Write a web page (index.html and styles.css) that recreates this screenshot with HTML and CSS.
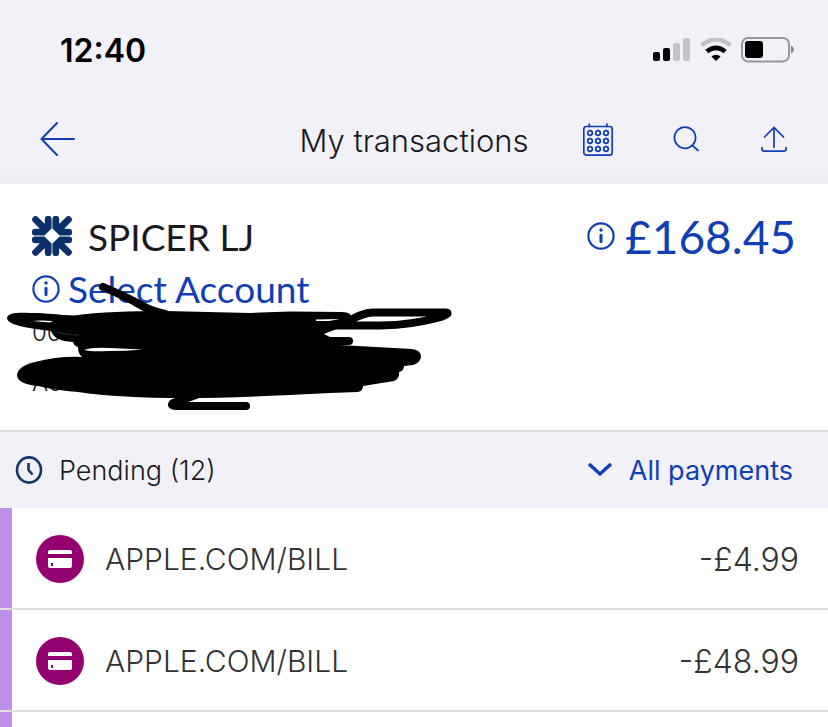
FILE: index.html
```html
<!DOCTYPE html>
<html lang="en">
<head>
<meta charset="utf-8">
<meta name="viewport" content="width=device-width, initial-scale=1">
<title>My transactions</title>
<link rel="stylesheet" href="styles.css">
</head>
<body>
<header class="top">
  <div class="status">
    <span class="clock">12:40</span>
    <span class="status-icons">
      <svg width="38" height="24" viewBox="0 0 38 24">
        <rect x="0" y="14" width="7" height="9" rx="2"/>
        <rect x="10" y="10" width="7" height="13" rx="2"/>
        <rect x="20" y="5" width="7" height="18" rx="2" fill="#c4c3c9"/>
        <rect x="30" y="0" width="7" height="23" rx="2" fill="#c4c3c9"/>
      </svg>
      <svg width="32" height="24" viewBox="0 0 32 24" fill="none">
        <path d="M1.600 7.400Q16-4.600 30.400 7.400" stroke="#c4c3c9" stroke-width="4.600"/>
        <path d="M6.800 13.600Q16 6 25.200 13.600" stroke="#000" stroke-width="4.600"/>
        <path d="M11.400 18.600Q16 15 20.600 18.600L16 23z" fill="#000"/>
      </svg>
      <svg width="54" height="26" viewBox="0 0 54 26">
        <rect x="1" y="1" width="47" height="23.4" rx="6" fill="none" stroke="#98979d" stroke-width="2"/>
        <rect x="4" y="4" width="18" height="17" rx="3"/>
        <path d="M50 8.6q3 1.2 3 4t-3 4z" fill="#8b8a90"/>
      </svg>
    </span>
  </div>
  <nav class="nav">
    <button class="icon-btn" aria-label="Back">
      <svg width="36" height="36" viewBox="0 0 36 36"><path d="M17 1L1.500 17L17 33M2 17H34" stroke-width="2"/></svg>
    </button>
    <h1>My transactions</h1>
    <div class="actions">
      <button class="icon-btn" aria-label="Calendar">
        <svg width="32" height="34" viewBox="0 0 32 34" stroke-width="1.7">
          <rect x="1.800" y="3.500" width="28.400" height="28.600" rx="2.600"/>
          <path d="M7.300 1V3.500M24.900 1V3.500"/>
          <circle cx="8" cy="10" r="2.300"/><circle cx="16" cy="10" r="2.300"/><circle cx="24" cy="10" r="2.300"/>
          <circle cx="8" cy="18" r="2.300"/><circle cx="16" cy="18" r="2.300"/><circle cx="24" cy="18" r="2.300"/>
          <circle cx="8" cy="26" r="2.300"/><circle cx="16" cy="26" r="2.300"/><circle cx="24" cy="26" r="2.300"/>
        </svg>
      </button>
      <button class="icon-btn" aria-label="Search">
        <svg width="28" height="28" viewBox="0 0 28 28" stroke-width="1.7"><circle cx="12" cy="11.700" r="10.600"/><path d="M19.300 19.300L25 24.500"/></svg>
      </button>
      <button class="icon-btn" aria-label="Share">
        <svg width="28" height="28" viewBox="0 0 28 28" stroke-width="1.7"><path d="M14 21.500V1.500M4.500 11L14 1.500L23.500 11M2 21.500V23Q2 25.200 4.500 25.200H23.500Q26 25.200 26 23V21.500"/></svg>
      </button>
    </div>
  </nav>
</header>
<main>
  <section class="account">
    <div class="account-row">
      <svg class="logo" width="40" height="40" viewBox="0 0 40 40">
        <defs><g id="arrow"><path d="M16.200 3.200V11L11 16.200H3.200M3.600 3.600L12 12"/></g></defs>
        <use href="#arrow"/>
        <use href="#arrow" transform="rotate(90 20 20)"/>
        <use href="#arrow" transform="rotate(180 20 20)"/>
        <use href="#arrow" transform="rotate(270 20 20)"/>
      </svg>
      <h2>SPICER LJ</h2>
      <button class="balance">
        <svg width="28" height="28" viewBox="0 0 28 28"><circle cx="14" cy="14" r="12.600" fill="none" stroke="currentColor" stroke-width="2.2"/><circle cx="14" cy="8" r="1.700"/><rect x="12.500" y="12" width="3" height="9" rx="1.200"/></svg>
        <span>£168.45</span>
      </button>
    </div>
    <button class="select">
      <svg width="28" height="28" viewBox="0 0 28 28"><circle cx="14" cy="14" r="12.600" fill="none" stroke="currentColor" stroke-width="2.2"/><circle cx="14" cy="8" r="1.700"/><rect x="12.500" y="12" width="3" height="9" rx="1.200"/></svg>
      <span>Select Account</span>
    </button>
    <p class="detail">00</p>
    <p class="detail">Ac</p>
    <svg class="scribble" width="470" height="136" viewBox="0 280 470 136">
      <path d="M7 318C8 313 16 312.500 30 313C48 313 60 315 74 315.500C100 312 130 311 165 311L250 313L290 311.500L342 312Q347 312 350 314L352 322L334 330L324 334L330 337L352 338L340 345L412 349Q421 350 421 357Q420 363 413 365L404 366Q404 371 399 372Q400 378 394 381L363 386Q363 391 358 392L330 393Q240 398 185 398Q120 398 78 392Q55 390 38 386Q17 384 17 375Q18 366 35 362Q58 356 82 357Q78 354 78 347Q74 346 73 342Q54 341 51 331C35 329 7 326 7 318Z"/>
      <path class="line" d="M103 287C112 291 125 296 137 303Q150 311 165 314"/>
      <path class="line" d="M318 331Q326 327 350 320C358 316 364 313 373 312.500H446Q451 313 441 317Q413 325 380 325.500H328M330 341H349"/>
      <path class="line" d="M196 395Q182 400 173 403Q170 406 176 406H246"/>
      <path class="gap" d="M84 350Q92 347 110 348L143 349.500Q125 351 108 351Q92 352 84 350ZM32 321Q40 320 53 321L50 322.500ZM316 319.500L340 319L329 321H316Z"/>
      <path d="M57 332Q65 335 79 335" fill="none" stroke="#444" stroke-width=".7"/>
    </svg>
  </section>
  <section>
    <div class="pending">
      <svg width="28" height="28" viewBox="0 0 28 28" fill="none" stroke="#12366d" stroke-width="2.600"><ellipse cx="14" cy="14" rx="12" ry="12.600"/><path d="M13.500 7V14L17.500 18.500"/></svg>
      <h3>Pending (12)</h3>
      <button class="filter">
        <svg width="26" height="16" viewBox="0 0 26 16"><path d="M2 2L13 12L24 2"/></svg>
        <span>All payments</span>
      </button>
    </div>
    <ul class="list">
      <li>
        <svg width="48" height="48" viewBox="0 0 48 48"><circle cx="24" cy="24" r="24" fill="#930070"/><path fill="#fff" fill-rule="evenodd" d="M12 19V17Q12 15 14 15H34Q36 15 36 17V19ZM12 23H36V31Q36 33 34 33H14Q12 33 12 31ZM15 28V31H17V28Z"/></svg>
        <span class="payee">APPLE.COM/BILL</span><span>-£4.99</span>
      </li>
      <li>
        <svg width="48" height="48" viewBox="0 0 48 48"><circle cx="24" cy="24" r="24" fill="#930070"/><path fill="#fff" fill-rule="evenodd" d="M12 19V17Q12 15 14 15H34Q36 15 36 17V19ZM12 23H36V31Q36 33 34 33H14Q12 33 12 31ZM15 28V31H17V28Z"/></svg>
        <span class="payee">APPLE.COM/BILL</span><span>-£48.99</span>
      </li>
      <li class="more"></li>
    </ul>
  </section>
</main>
</body>
</html>
```
FILE: styles.css
```css
* {
  box-sizing: border-box;
}

body {
  margin: 0;
  background: #fff;
  color: #1a1a1e;
  font-family: Inter, "Liberation Sans", sans-serif;
  font-weight: 300;
}

h1, h2, h3, p, ul {
  margin: 0;
  padding: 0;
  font-weight: 300;
}

svg {
  display: block;
  flex: none;
}

button {
  padding: 0;
  border: 0;
  background: none;
  color: #103eb5;
  font: inherit;
}

button svg {
  fill: currentColor;
}

.top {
  background: linear-gradient(#f2f1f8 92%, #eeedf3);
}

.status {
  display: flex;
  justify-content: space-between;
  align-items: center;
  height: 96px;
  padding: 4px 33px 0 60px;
}

.clock {
  color: #000;
  font-size: 32px;
  font-weight: 600;
}

.status-icons {
  display: flex;
  align-items: center;
  gap: 9px;
}

.nav {
  display: grid;
  grid-template-columns: 1fr auto 1fr;
  align-items: center;
  height: 88px;
  padding: 0 40px;
}

.nav h1 {
  font-size: 31px;
}

.icon-btn svg {
  fill: none;
  stroke: currentColor;
  stroke-linecap: round;
}

.actions {
  display: flex;
  justify-content: flex-end;
  align-items: center;
  gap: 59px;
}

.account {
  position: relative;
  height: 248px;
  padding: 27px 32px 0;
  border-bottom: 2px solid #dedede;
  font-family: Lato, "Liberation Sans", sans-serif;
}

.account-row {
  display: flex;
  align-items: center;
  height: 50px;
}

.logo {
  fill: none;
  stroke: #0b3168;
  stroke-width: 6.8;
  stroke-linecap: round;
}

.account h2 {
  margin-left: 16px;
  font-size: 37px;
  font-weight: 400;
}

.balance {
  display: flex;
  align-items: center;
  gap: 10px;
  margin-left: auto;
  font-size: 46px;
  font-weight: 400;
}

.select {
  display: flex;
  align-items: center;
  gap: 8px;
  height: 55px;
  font-size: 37px;
  font-weight: 400;
}

.detail {
  height: 50px;
  font-family: Inter, "Liberation Sans", sans-serif;
  font-size: 24px;
  line-height: 34px;
}

.scribble {
  position: absolute;
  top: 96px;
  left: 0;
}

.line {
  fill: none;
  stroke: #000;
  stroke-width: 8;
  stroke-linecap: round;
  stroke-linejoin: round;
}

.gap {
  fill: #fff;
}

.pending {
  display: flex;
  align-items: center;
  gap: 16px;
  height: 76px;
  padding: 0 35px 0 15px;
  background: #f2f1f8;
  font-size: 27px;
}

.pending h3 {
  font-size: 27px;
}

.filter {
  display: flex;
  align-items: center;
  gap: 16px;
  margin-left: auto;
  font-weight: 400;
}

.filter svg {
  fill: none;
  stroke: currentColor;
  stroke-width: 3.4;
}

.list {
  list-style: none;
}

.list li {
  display: flex;
  align-items: center;
  height: 102px;
  padding: 2px 29px 0 36px;
  border-bottom: 2px solid #dedede;
  background: linear-gradient(90deg, #be8fe8 12px, #fff 12px);
  background-clip: padding-box;
  color: #333;
  font-size: 32px;
}

.list .more {
  height: 15px;
  border-bottom: 0;
}

.payee {
  margin-left: 21px;
  margin-right: auto;
  font-size: 30px;
}
```
